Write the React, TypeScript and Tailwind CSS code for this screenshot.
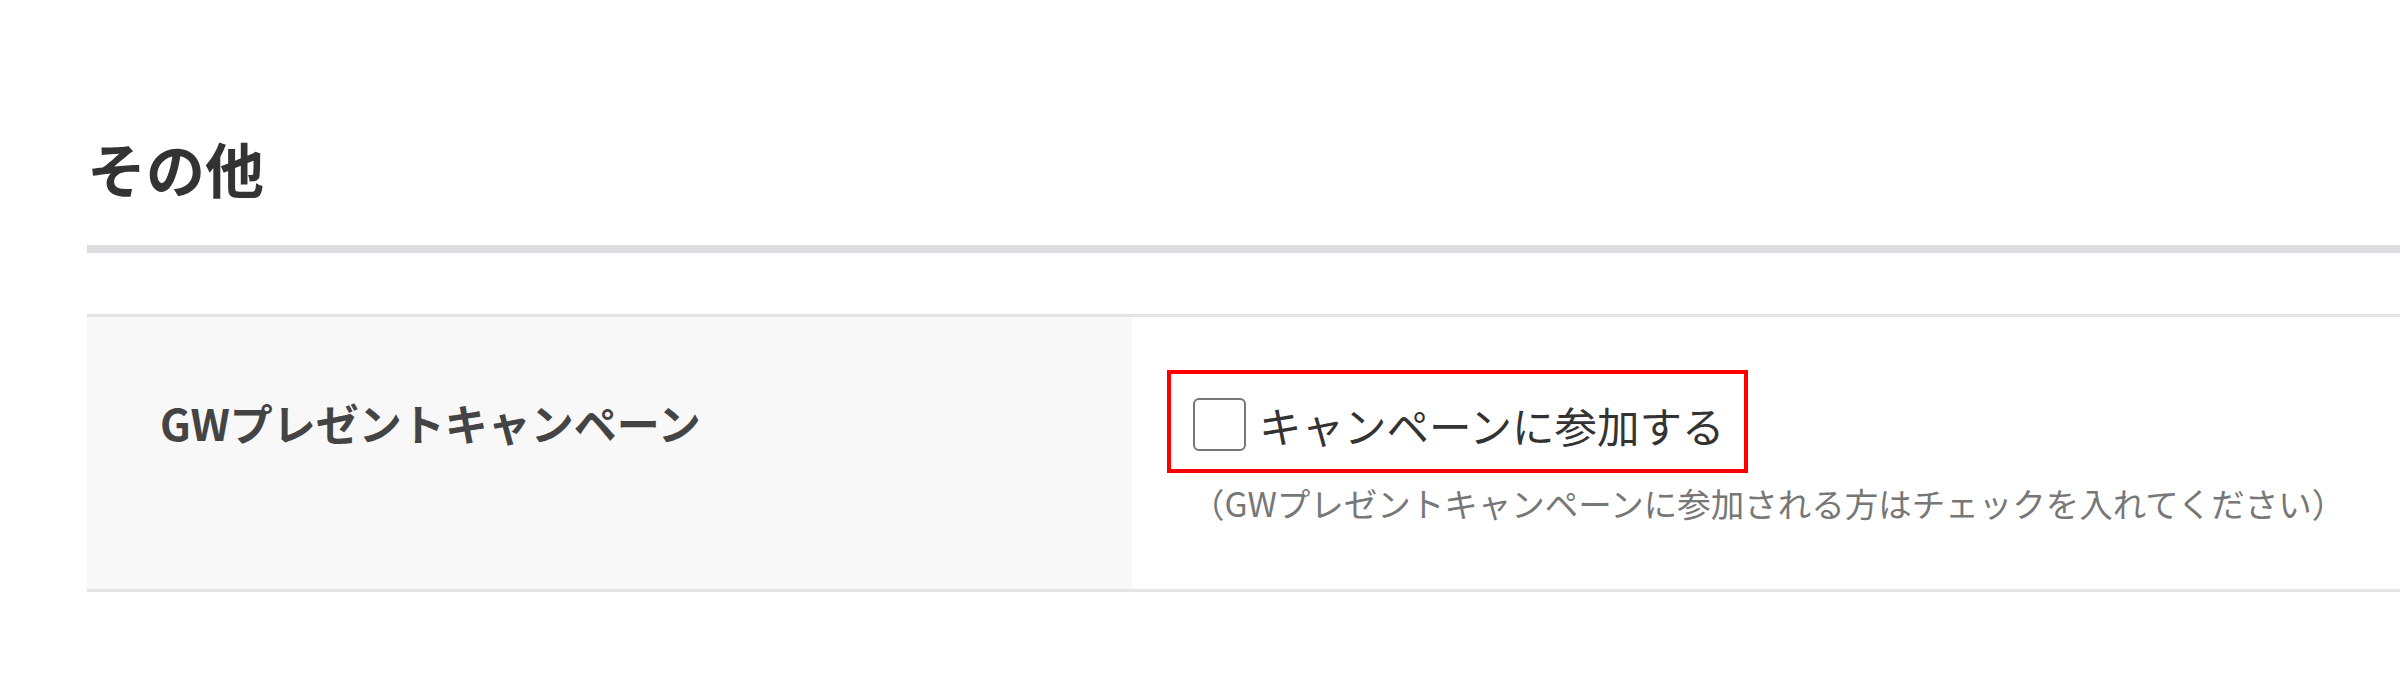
import React from 'react';

const jp = 'font-["Noto_Sans_CJK_JP","Noto_Sans",sans-serif]';

export default function App() {
  const [joined, setJoined] = React.useState(false);

  return (
    <div className={`h-[680px] w-full overflow-hidden bg-white pl-[87px] ${jp}`}>
      <h2 className="mt-[139px] text-[59px] font-bold leading-[58px] text-[#333333]">
        その他
      </h2>
      <div className="mt-[48px] h-[8px] bg-[#dcdde1]" />

      <div className="mt-[61px] flex border-y-[3px] border-[#e4e4e4]">
        <div className="w-[1045px] shrink-0 bg-[#f8f8f8] pl-[73px] pt-[84px]">
          <span className="text-[43px] font-bold leading-[42px] text-[#444444]">
            GWプレゼントキャンペーン
          </span>
        </div>
        <div className="flex-1 pb-[70px] pl-[35px] pt-[53px]">
          <label className="inline-flex cursor-pointer items-center border-4 border-[#ff0000] pb-[18px] pl-[22px] pr-[20px] pt-[24px]">
            <input
              type="checkbox"
              checked={joined}
              onChange={(e) => setJoined(e.target.checked)}
              className="m-0 h-[53px] w-[53px] shrink-0 cursor-pointer appearance-none rounded-[6px] border-2 border-[#767676] bg-white checked:bg-[#2f6fd6]"
            />
            <span className="ml-[13px] whitespace-nowrap text-[42.5px] leading-[42px] text-[#333333]">
              キャンペーンに参加する
            </span>
          </label>
          <p className="ml-[24px] mt-[14px] whitespace-nowrap text-[33.5px] leading-[32px] text-[#777777]">
            （GWプレゼントキャンペーンに参加される方はチェックを入れてください）
          </p>
        </div>
      </div>
    </div>
  );
}
